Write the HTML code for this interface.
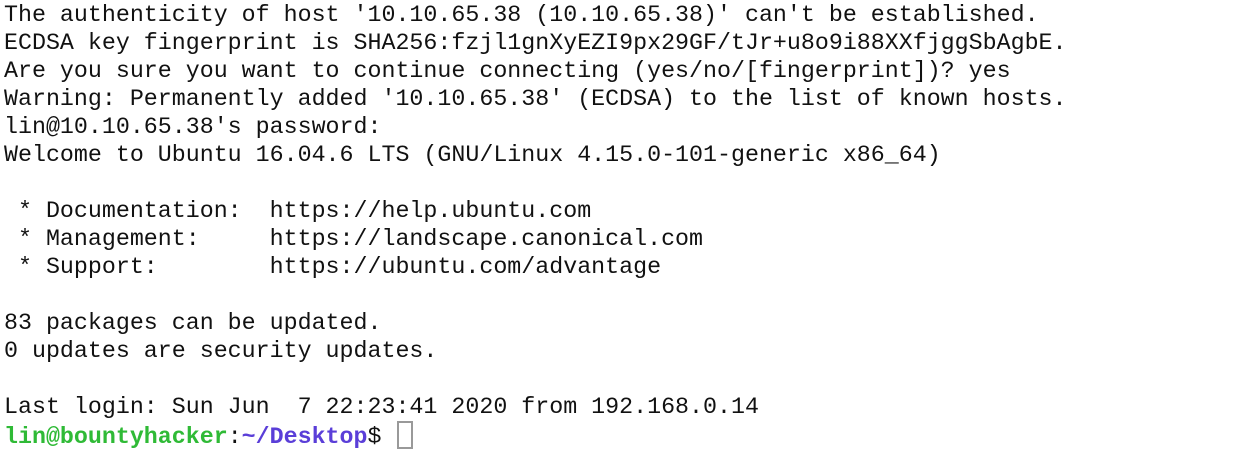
<!DOCTYPE html>
<html><head><style>
html,body{margin:0;padding:0;background:#fff;width:1244px;height:452px;overflow:hidden}
pre{margin:0;position:absolute;left:4px;top:1px;font-family:"Liberation Mono",monospace;font-size:23.3px;line-height:28px;color:#111}
.g{color:#2fba36;font-weight:bold}
.b{color:#5a3ed8;font-weight:bold}
.c{display:inline-block;width:12px;height:24px;border:2px solid #999;vertical-align:-6px;margin-left:2px}
</style></head><body>
<pre>The authenticity of host '10.10.65.38 (10.10.65.38)' can't be established.
ECDSA key fingerprint is SHA256:fzjl1gnXyEZI9px29GF/tJr+u8o9i88XXfjggSbAgbE.
Are you sure you want to continue connecting (yes/no/[fingerprint])? yes
Warning: Permanently added '10.10.65.38' (ECDSA) to the list of known hosts.
lin@10.10.65.38's password:
Welcome to Ubuntu 16.04.6 LTS (GNU/Linux 4.15.0-101-generic x86_64)

 * Documentation:  https://help.ubuntu.com
 * Management:     https://landscape.canonical.com
 * Support:        https://ubuntu.com/advantage

83 packages can be updated.
0 updates are security updates.

Last login: Sun Jun  7 22:23:41 2020 from 192.168.0.14
<span class="g">lin@bountyhacker</span>:<span class="b">~/Desktop</span>$ <span class="c"></span></pre>
</body></html>
